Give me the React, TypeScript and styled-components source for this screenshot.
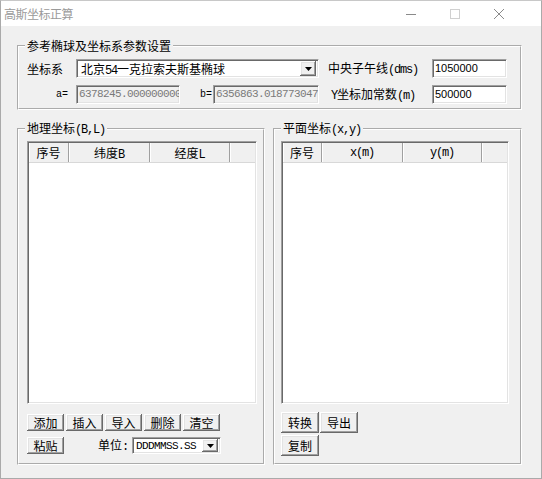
import React from 'react';
import styled, { createGlobalStyle } from 'styled-components';

const cjk = `"Noto Sans CJK SC", "Noto Sans", sans-serif`;

const Global = createGlobalStyle`
  html, body { margin: 0; padding: 0; background: #ffffff; }
  body { font-family: ${cjk}; font-size: 12px; color: #000; }
  * { box-sizing: border-box; }
`;

const Window = styled.div`
  width: 542px;
  height: 479px;
  display: flex;
  flex-direction: column;
  border: 1px solid #aaaaaa;
  border-top-color: #c8c8c8;
  background: #f0f0f0;
  overflow: hidden;
`;

const TitleBar = styled.div`
  height: 25px;
  flex-shrink: 0;
  background: #ffffff;
  display: flex;
  align-items: center;
`;

const Title = styled.div`
  flex: 1;
  padding-left: 3px;
  font-size: 12px;
  line-height: 14px;
  letter-spacing: -0.5px;
  color: #9a9a9a;
`;

const Controls = styled.div`
  display: flex;
  padding-right: 20px;
`;

const CtrlBtn = styled.div`
  width: 44px;
  height: 25px;
  display: flex;
  align-items: center;
  justify-content: center;
`;

const Body = styled.div`
  flex: 1;
  display: flex;
  flex-direction: column;
  gap: 11px;
  padding: 13px 0 0 16px;
`;

const Group = styled.fieldset<{ $w: number }>`
  margin: 0;
  padding: 0;
  min-width: 0;
  width: ${p => p.$w}px;
  border: 2px groove #ffffff;
  display: flex;
  flex-direction: column;
`;

const Legend = styled.legend`
  margin-left: 6px;
  padding: 0 2px;
  font-size: 12px;
  line-height: 14px;
`;

const Half = styled.span`
  font-family: "Liberation Mono", monospace;
  font-size: 12px;
  letter-spacing: -1.2px;
`;

const TopInner = styled.div`
  display: flex;
  flex-direction: column;
  gap: 7px;
  padding: 6px 0 4px 8px;
`;

const Row = styled.div<{ $gap?: number }>`
  display: flex;
  align-items: center;
  gap: ${p => p.$gap ?? 0}px;
`;

const Label = styled.div<{ $w: number; $ml?: number; $align?: string; $pr?: number }>`
  width: ${p => p.$w}px;
  margin-left: ${p => p.$ml ?? 0}px;
  padding-right: ${p => p.$pr ?? 0}px;
  text-align: ${p => p.$align ?? 'left'};
  font-size: 12px;
  line-height: 14px;
  white-space: nowrap;
  flex-shrink: 0;
`;

const SmallLabel = styled(Label)`
  font-family: "Liberation Mono", monospace;
  font-size: 10px;
`;

const sunken = `
  border: 1px solid;
  border-color: #a0a0a0 #ffffff #ffffff #a0a0a0;
  box-shadow: inset 1px 1px 0 #696969, inset -1px -1px 0 #e3e3e3;
`;

const Field = styled.div<{ $w: number; $disabled?: boolean }>`
  ${sunken}
  width: ${p => p.$w}px;
  height: 19px;
  flex-shrink: 0;
  padding: 1px 0 1px 2px;
  background: ${p => (p.$disabled ? '#f0f0f0' : '#ffffff')};
  color: ${p => (p.$disabled ? '#7a7a7a' : '#000')};
  font-family: ${p => (p.$disabled ? '"Liberation Mono", monospace' : '"Liberation Sans", sans-serif')};
  font-size: 11px;
  letter-spacing: ${p => (p.$disabled ? '-0.6px' : '0')};
  line-height: 15px;
  white-space: nowrap;
  overflow: hidden;
`;

const Combo = styled.div<{ $w: number; $h: number }>`
  ${sunken}
  width: ${p => p.$w}px;
  height: ${p => p.$h}px;
  flex-shrink: 0;
  padding: 1px;
  background: #ffffff;
  display: flex;
  align-items: stretch;
`;

const ComboText = styled.div<{ $mono?: boolean }>`
  flex: 1;
  padding-left: ${p => (p.$mono ? 2 : 3)}px;
  display: flex;
  align-items: center;
  white-space: nowrap;
  overflow: hidden;
  font-family: ${p => (p.$mono ? '"Liberation Mono", monospace' : cjk)};
  font-size: ${p => (p.$mono ? 11 : 12)}px;
  letter-spacing: ${p => (p.$mono ? '-0.6px' : '0')};
`;

const raised = `
  box-shadow: inset -1px -1px 0 #696969, inset 1px 1px 0 #ffffff, inset -2px -2px 0 #a0a0a0, inset 2px 2px 0 #e3e3e3;
`;

const DropBtn = styled.div`
  ${raised}
  width: 16px;
  margin-right: 1px;
  background: #f0f0f0;
  display: flex;
  align-items: center;
  justify-content: center;
`;

const BottomRow = styled.div`
  display: flex;
  gap: 8px;
`;

const PanelInner = styled.div<{ $pl: number; $pb: number }>`
  flex: 1;
  display: flex;
  flex-direction: column;
  padding: 4px 0 ${p => p.$pb}px ${p => p.$pl}px;
`;

const List = styled.div<{ $w: number; $h?: number }>`
  ${sunken}
  width: ${p => p.$w}px;
  ${p => (p.$h ? `height: ${p.$h}px;` : 'flex: 1;')}
  padding: 1px;
  background: #ffffff;
  display: flex;
  flex-direction: column;
`;

const Header = styled.div`
  height: 20px;
  display: flex;
  background: #f0f0f0;
  border-bottom: 1px solid #d8d8d8;
`;

const HeadCell = styled.div<{ $w?: number }>`
  ${p => (p.$w ? `width: ${p.$w}px;` : 'flex: 1;')}
  flex-shrink: 0;
  display: flex;
  align-items: center;
  justify-content: center;
  border-right: 1px solid #a0a0a0;
  box-shadow: inset 1px 0 0 #ffffff;
  font-size: 12px;
  white-space: nowrap;
  &:last-child { border-right: none; }
`;

const Buttons = styled.div<{ $mt: number; $gap: number }>`
  display: flex;
  flex-direction: column;
  gap: ${p => p.$gap}px;
  margin-top: ${p => p.$mt}px;
`;

const Btn = styled.button<{ $w: number; $h: number }>`
  ${raised}
  width: ${p => p.$w}px;
  height: ${p => p.$h}px;
  flex-shrink: 0;
  margin: 0;
  padding: 0;
  border: none;
  background: #f0f0f0;
  font-family: ${cjk};
  font-size: 12px;
  line-height: 14px;
  color: #000;
`;

const Arrow = () => (
  <svg width="7" height="4" viewBox="0 0 7 4">
    <path d="M0 0H7L3.5 4Z" fill="#000" />
  </svg>
);

const App: React.FC = () => (
  <>
    <Global />
    <Window>
      <TitleBar>
        <Title>高斯坐标正算</Title>
        <Controls>
          <CtrlBtn>
            <svg width="10" height="10" viewBox="0 0 10 10">
              <path d="M0 5.5H10" stroke="#8a8a8a" strokeWidth="1" />
            </svg>
          </CtrlBtn>
          <CtrlBtn>
            <svg width="10" height="10" viewBox="0 0 10 10">
              <rect x="0.5" y="0.5" width="9" height="9" fill="none" stroke="#d0d0d0" strokeWidth="1" />
            </svg>
          </CtrlBtn>
          <CtrlBtn>
            <svg width="10" height="10" viewBox="0 0 10 10">
              <path d="M0 0L10 10M10 0L0 10" stroke="#8a8a8a" strokeWidth="1" />
            </svg>
          </CtrlBtn>
        </Controls>
      </TitleBar>
      <Body>
        <Group $w={505}>
          <Legend>参考椭球及坐标系参数设置</Legend>
          <TopInner>
            <Row>
              <Label $w={49}>坐标系</Label>
              <Combo $w={243} $h={19}>
                <ComboText><span>北京<Half>54</Half>一克拉索夫斯基椭球</span></ComboText>
                <DropBtn><Arrow /></DropBtn>
              </Combo>
              <Label $w={104} $ml={9}>中央子午线<Half>(dms)</Half></Label>
              <Field $w={75}>1050000</Field>
            </Row>
            <Row>
              <SmallLabel $w={49} $align="right" $pr={8}>a=</SmallLabel>
              <Field $w={104} $disabled>6378245.000000000</Field>
              <SmallLabel $w={33} $align="right" $pr={1}>b=</SmallLabel>
              <Field $w={106} $disabled>6356863.018773047</Field>
              <Label $w={101} $ml={12}><Half>Y</Half>坐标加常数<Half>(m)</Half></Label>
              <Field $w={75}>500000</Field>
            </Row>
          </TopInner>
        </Group>
        <BottomRow>
          <Group $w={248}>
            <Legend>地理坐标<Half>(B,L)</Half></Legend>
            <PanelInner $pl={8} $pb={9}>
              <List $w={230} $h={263}>
                <Header>
                  <HeadCell $w={40}><span>序号</span></HeadCell>
                  <HeadCell $w={81}><span>纬度<Half>B</Half></span></HeadCell>
                  <HeadCell $w={80}><span>经度<Half>L</Half></span></HeadCell>
                  <HeadCell />
                </Header>
              </List>
              <Buttons $mt={10} $gap={6}>
                <Row $gap={2}>
                  <Btn $w={37} $h={17}>添加</Btn>
                  <Btn $w={37} $h={17}>插入</Btn>
                  <Btn $w={37} $h={17}>导入</Btn>
                  <Btn $w={37} $h={17}>删除</Btn>
                  <Btn $w={37} $h={17}>清空</Btn>
                </Row>
                <Row>
                  <Btn $w={37} $h={17}>粘贴</Btn>
                  <Label $w={34} $ml={34}>单位<Half>:</Half></Label>
                  <Combo $w={89} $h={17}>
                    <ComboText $mono><span>DDDMMSS.SS</span></ComboText>
                    <DropBtn><Arrow /></DropBtn>
                  </Combo>
                </Row>
              </Buttons>
            </PanelInner>
          </Group>
          <Group $w={249}>
            <Legend>平面坐标<Half>(x,y)</Half></Legend>
            <PanelInner $pl={6} $pb={7}>
              <List $w={228}>
                <Header>
                  <HeadCell $w={39}><span>序号</span></HeadCell>
                  <HeadCell $w={81}><Half>x(m)</Half></HeadCell>
                  <HeadCell $w={79}><Half>y(m)</Half></HeadCell>
                  <HeadCell />
                </Header>
              </List>
              <Buttons $mt={8} $gap={2}>
                <Row $gap={1}>
                  <Btn $w={38} $h={21}>转换</Btn>
                  <Btn $w={38} $h={21}>导出</Btn>
                </Row>
                <Row>
                  <Btn $w={38} $h={21}>复制</Btn>
                </Row>
              </Buttons>
            </PanelInner>
          </Group>
        </BottomRow>
      </Body>
    </Window>
  </>
);

export default App;
